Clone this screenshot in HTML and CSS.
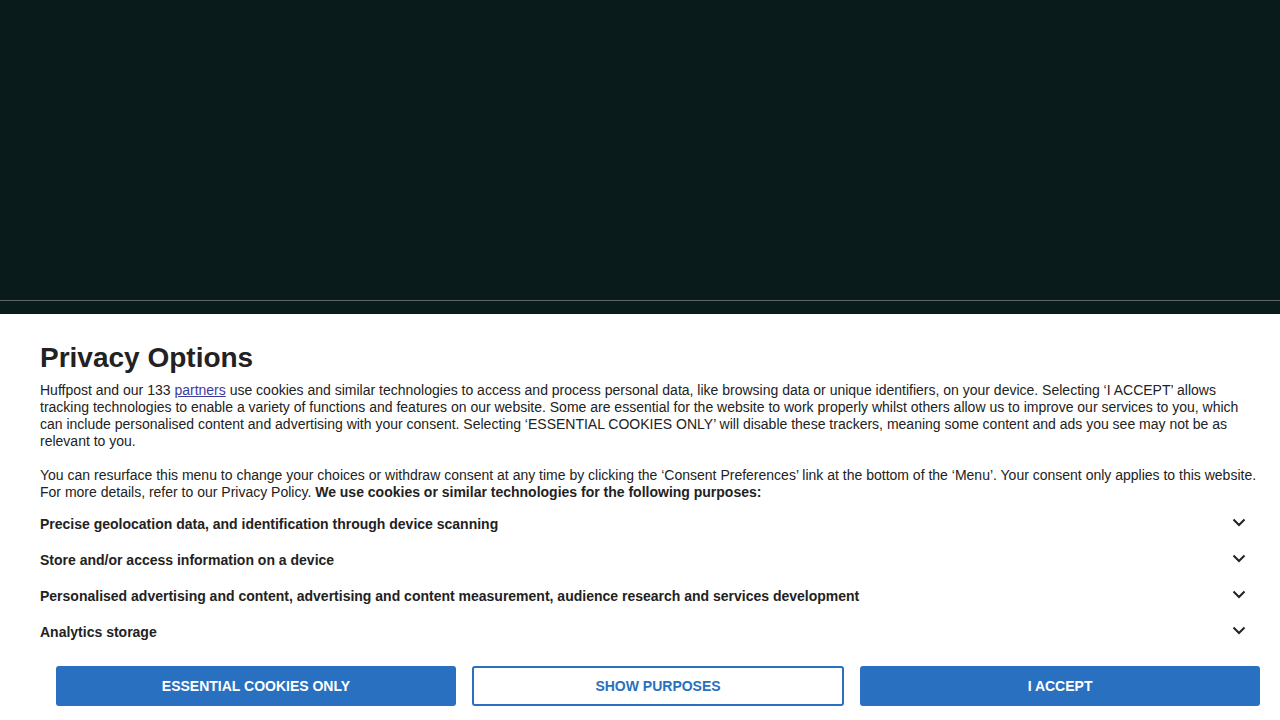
FILE: index.html
```html
<!DOCTYPE html>
<html lang="en">
<head>
    <meta charset="UTF-8">
    <meta name="viewport" content="width=device-width, initial-scale=1.0">
    <title>Privacy Options</title>
    <link rel="stylesheet" href="styles.css">
</head>
<body>
    <div class="backdrop">
        <div class="backdrop-line"></div>
    </div>

    <section class="consent">
        <h1>Privacy Options</h1>
        <p>Huffpost and our 133 <a href="#partners">partners</a> use cookies and similar technologies to access and process personal data, like browsing data or unique identifiers, on your device. Selecting ‘I ACCEPT’ allows tracking technologies to enable a variety of functions and features on our website. Some are essential for the website to work properly whilst others allow us to improve our services to you, which can include personalised content and advertising with your consent. Selecting ‘ESSENTIAL COOKIES ONLY’ will disable these trackers, meaning some content and ads you see may not be as relevant to you.</p>
        <p>You can resurface this menu to change your choices or withdraw consent at any time by clicking the ‘Consent Preferences’ link at the bottom of the ‘Menu’. Your consent only applies to this website. For more details, refer to our Privacy Policy. <strong>We use cookies or similar technologies for the following purposes:</strong></p>

        <ul class="purposes">
            <li>
                <span>Precise geolocation data, and identification through device scanning</span>
                <svg class="chevron" viewBox="0 0 14 9" width="14" height="9"><path d="M1.5 1.5 L7 7 L12.5 1.5"/></svg>
            </li>
            <li>
                <span>Store and/or access information on a device</span>
                <svg class="chevron" viewBox="0 0 14 9" width="14" height="9"><path d="M1.5 1.5 L7 7 L12.5 1.5"/></svg>
            </li>
            <li>
                <span>Personalised advertising and content, advertising and content measurement, audience research and services development</span>
                <svg class="chevron" viewBox="0 0 14 9" width="14" height="9"><path d="M1.5 1.5 L7 7 L12.5 1.5"/></svg>
            </li>
            <li>
                <span>Analytics storage</span>
                <svg class="chevron" viewBox="0 0 14 9" width="14" height="9"><path d="M1.5 1.5 L7 7 L12.5 1.5"/></svg>
            </li>
        </ul>

        <div class="actions">
            <button class="btn btn-solid btn-wide">ESSENTIAL COOKIES ONLY</button>
            <button class="btn btn-outline">SHOW PURPOSES</button>
            <button class="btn btn-solid btn-wide">I ACCEPT</button>
        </div>
    </section>
</body>
</html>
```

FILE: styles.css
```css
* {
    margin: 0;
    padding: 0;
    box-sizing: border-box;
}

body {
    font-family: 'Liberation Sans', Arial, sans-serif;
    background: #fff;
    color: #222;
    height: 720px;
    overflow: hidden;
}

.backdrop {
    background: #0a1b1b;
    height: 314px;
    padding-top: 300px;
}

.backdrop-line {
    height: 1px;
    background: #5e6666;
}

.consent {
    padding: 27px 20px 0 40px;
}

.consent h1 {
    font-size: 28px;
    line-height: 34px;
    font-weight: bold;
    color: #222;
    margin-bottom: 7px;
}

.consent p {
    font-size: 14px;
    line-height: 17px;
    margin-bottom: 17px;
}

.consent p:last-of-type {
    margin-bottom: 5px;
}

.consent a {
    color: #3b3ba0;
    text-decoration: underline;
}

.purposes {
    list-style: none;
}

.purposes li {
    display: flex;
    justify-content: space-between;
    align-items: center;
    height: 36px;
    font-size: 14px;
    font-weight: bold;
    padding-right: 14px;
}

.chevron {
    fill: none;
    stroke: #222;
    stroke-width: 2;
    margin-top: -3px;
}

.actions {
    display: flex;
    gap: 16px;
    padding: 16px 0 0 16px;
}

.btn {
    height: 40px;
    border-radius: 3px;
    font-family: 'Liberation Sans', Arial, sans-serif;
    font-size: 14px;
    font-weight: bold;
    cursor: pointer;
}

.btn-wide {
    flex: 400 0 0;
}

.btn-outline {
    flex: 372 0 0;
}

.btn-solid {
    background: #2970c1;
    color: #fff;
    border: 2px solid #2970c1;
}

.btn-outline {
    background: #fff;
    color: #2970c1;
    border: 2px solid #2970c1;
}
```
